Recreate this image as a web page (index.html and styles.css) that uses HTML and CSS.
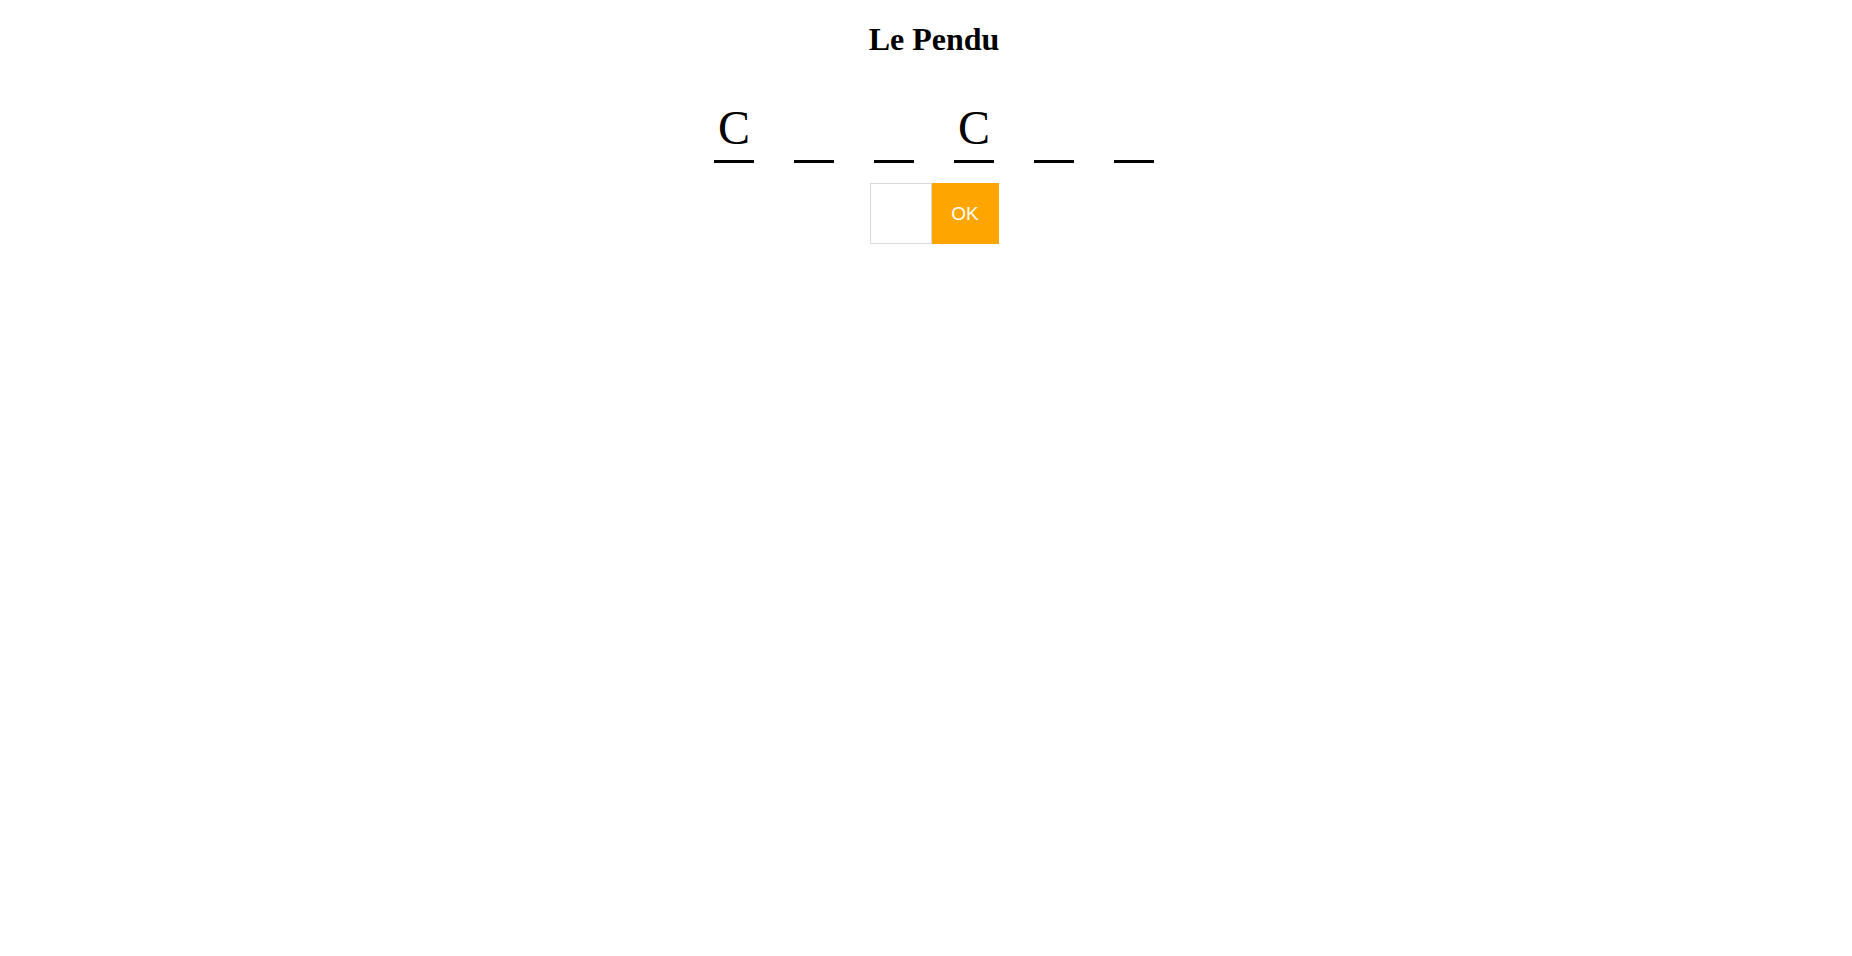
FILE: index.html
```html
<!DOCTYPE html>
<html lang="fr">
<head>
<meta charset="utf-8">
<title>Le Pendu</title>
<link rel="stylesheet" href="styles.css">
</head>
<body>
<h1 class="title">Le Pendu</h1>
<div class="word">
  <span class="slot">C</span>
  <span class="slot"></span>
  <span class="slot"></span>
  <span class="slot">C</span>
  <span class="slot"></span>
  <span class="slot"></span>
</div>
<form class="guess">
  <input class="guess-input" type="text" maxlength="1">
  <button class="guess-btn" type="button">OK</button>
</form>
</body>
</html>
```

FILE: styles.css
```css
body {
  margin: 0 0 8px 16px;
  font-family: "Liberation Serif", "Times New Roman", serif;
  color: #000;
  background: #fff;
}

.title {
  font-size: 32px;
  font-weight: bold;
  text-align: center;
  margin: 21.44px 0;
}

.word {
  display: flex;
  justify-content: center;
  gap: 40px;
  margin-top: 38px;
}

.slot {
  display: block;
  width: 40px;
  height: 64px;
  font-size: 48px;
  line-height: 64px;
  text-align: center;
  border-bottom: 3px solid #000;
}

.guess {
  display: flex;
  justify-content: center;
  margin-top: 20px;
}

.guess-input {
  box-sizing: border-box;
  width: 62px;
  height: 61px;
  margin: 0;
  border: 1px solid #d9d9d9;
  padding: 0 6px;
  font-size: 18px;
  outline: none;
}

.guess-btn {
  box-sizing: border-box;
  width: 67px;
  height: 61px;
  margin: 0;
  border: none;
  background: #ffa500;
  color: #fff;
  font-family: "Liberation Sans", Arial, sans-serif;
  font-size: 19px;
  padding: 0;
}
```
